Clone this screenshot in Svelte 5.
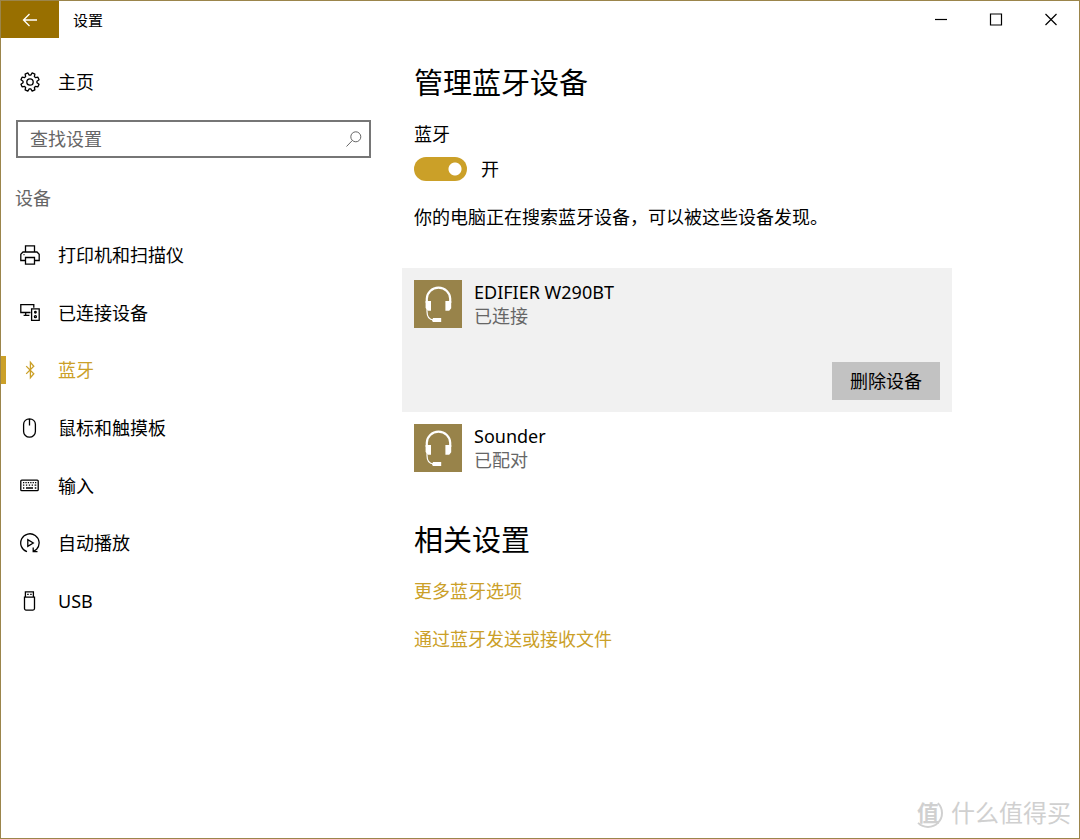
<script>
  let query = $state('');
  let bluetoothOn = $state(true);

  const navItems = [
    { id: 'printers', label: '打印机和扫描仪' },
    { id: 'connected', label: '已连接设备' },
    { id: 'bluetooth', label: '蓝牙' },
    { id: 'mouse', label: '鼠标和触摸板' },
    { id: 'typing', label: '输入' },
    { id: 'autoplay', label: '自动播放' },
    { id: 'usb', label: 'USB' }
  ];
  let active = $state('bluetooth');

  const devices = [
    { name: 'EDIFIER W290BT', status: '已连接', selected: true },
    { name: 'Sounder', status: '已配对', selected: false }
  ];

  // Outline of an eight-toothed gear centred in a 20×20 box.
  const gear =
    'M' +
    Array.from({ length: 8 }, (_, k) =>
      [[-16, 7], [-9, 9.3], [9, 9.3], [16, 7]].map(([offset, r]) => {
        const a = ((k * 45 + 22.5 + offset) * Math.PI) / 180;
        return `${(10 + r * Math.cos(a)).toFixed(2)} ${(10 + r * Math.sin(a)).toFixed(2)}`;
      }).join('L')
    ).join('L') +
    'Z';
</script>

{#snippet icon(id)}
  <svg class="icon" viewBox="0 0 20 20" width="20" height="20" aria-hidden="true">
    {#if id === 'home'}
      <path d={gear} stroke-linejoin="round" />
      <circle cx="10" cy="10" r="3.2" />
    {:else if id === 'printers'}
      <path d="M5.5 7V.9h9V7M5 15.5H.8V9.2L3 7h14l2.2 2.2v6.3H15M5.5 12.5h9v6.6h-9z" />
      <path d="M3.5 9.6h1" />
    {:else if id === 'connected'}
      <path d="M10.5 9.5H.8V1.6h13v3.2M5.7 9.5v2.7M3.6 12.3h5.8M11.6 5.9h7.6v11.5h-7.6z" />
      <circle cx="15.4" cy="9.3" r=".8" />
      <circle cx="15.4" cy="13.7" r="1" />
    {:else if id === 'bluetooth'}
      <path d="M6.2 6.1 13.8 13.8 10.4 17.7V2.3L13.8 6.2 6.2 13.9" />
    {:else if id === 'mouse'}
      <path d="M3.6 6.2a5.9 5.4 0 0 1 11.8 0v7.2a5.9 5.8 0 0 1-11.8 0zM9.5.8v6.7" />
    {:else if id === 'typing'}
      <rect x=".8" y="4.1" width="17.4" height="10.6" rx="1" />
      <path d="M3 6.7h1.3M5.4 6.7h1.3M7.8 6.7h1.3M10.2 6.7h1.3M12.6 6.7h1.3M15 6.7h1.3M3 9.2h1.3M5.9 9.2h1.3M8.8 9.2h1.3M11.7 9.2h1.3M14.6 9.2h1.7M3 12h1.3M6 12h7M14.8 12h1.5" />
    {:else if id === 'autoplay'}
      <path d="M7 18.7A9.2 9.2 0 1 1 16.6 16.3L13.6 18.4M13.2 14.4v4.3h4.3M7.8 6.6v6.8l5.5-3.4z" />
    {:else if id === 'usb'}
      <path d="M5.4 6V.8h8V6M4.5 6.1h10v11.5a1.5 1.5 0 0 1-1.5 1.5H6a1.5 1.5 0 0 1-1.5-1.5z" />
      <path d="M7.2 3.4h1.5M10.2 3.4h1.5" />
    {/if}
  </svg>
{/snippet}

<div class="window">
  <header class="titlebar">
    <button class="back" aria-label="返回">
      <svg viewBox="0 0 16 14" width="16" height="14" aria-hidden="true"><path d="M15 7H1.5M7.5 1 1.5 7l6 6" /></svg>
    </button>
    <span class="title">设置</span>
    <div class="controls">
      <button aria-label="最小化"><svg viewBox="0 0 14 14" width="14" height="14" aria-hidden="true"><path d="M1 6.5h12" /></svg></button>
      <button aria-label="最大化"><svg viewBox="0 0 14 14" width="14" height="14" aria-hidden="true"><path d="M1.5 1h11v11h-11z" /></svg></button>
      <button aria-label="关闭"><svg viewBox="0 0 14 14" width="14" height="14" aria-hidden="true"><path d="m1.5 1 11 11m0-11-11 11" /></svg></button>
    </div>
  </header>

  <div class="body">
    <aside>
      <a class="item" href="#home">{@render icon('home')}<span>主页</span></a>
      <div class="search">
        <input type="text" placeholder="查找设置" aria-label="查找设置" bind:value={query} />
        <svg viewBox="0 0 18 18" width="18" height="18" aria-hidden="true"><circle cx="10.8" cy="6.8" r="5" /><path d="M7.3 10.5 1.5 16.5" /></svg>
      </div>
      <p class="group">设备</p>
      <nav>
        {#each navItems as item (item.id)}
          <a class="item" class:active={active === item.id} href={'#' + item.id} onclick={() => (active = item.id)}>
            {@render icon(item.id)}<span>{item.label}</span>
          </a>
        {/each}
      </nav>
    </aside>

    <main>
      <h1>管理蓝牙设备</h1>
      <label class="label" for="bt">蓝牙</label>
      <div class="toggle">
        <input id="bt" type="checkbox" role="switch" bind:checked={bluetoothOn} />
        <span>{bluetoothOn ? '开' : '关'}</span>
      </div>
      <p class="note">你的电脑正在搜索蓝牙设备，可以被这些设备发现。</p>

      <ul>
        {#each devices as device (device.name)}
          <li class:selected={device.selected}>
            <div class="device">
              <svg class="headset" viewBox="0 0 48 48" width="48" height="48" aria-hidden="true">
                <path class="line" d="M12.8 23v-4.2a11.6 11 0 0 1 23.4 0V23" />
                <path class="solid" d="M11.6 21h5.4v9.8h-3L11.6 28zM31.4 21h5.8v7.2l-2 2.6h-3.8zM19 38h8.2v4H19l-1-1.2z" />
                <path class="thin" d="M13 28v3.5q0 8 6.5 8.5" />
              </svg>
              <div>
                <p>{device.name}</p>
                <p class="status">{device.status}</p>
              </div>
            </div>
            {#if device.selected}<button class="remove">删除设备</button>{/if}
          </li>
        {/each}
      </ul>

      <h2>相关设置</h2>
      <a class="link" href="#more">更多蓝牙选项</a>
      <a class="link" href="#transfer">通过蓝牙发送或接收文件</a>
    </main>
  </div>

  <div class="watermark"><span class="seal">值</span><span>什么值得买</span></div>
</div>

<style>
  :global(body) {
    margin: 0;
    background: #fff;
  }
  .window {
    box-sizing: border-box;
    position: relative;
    min-height: 100vh;
    border: 1px solid #9b854b;
    color: #000;
    background: #fff;
    font: 18px/24px 'Noto Sans', 'Noto Sans CJK SC', sans-serif;
  }
  p,
  h1,
  h2,
  ul {
    margin: 0;
    padding: 0;
    font-weight: 400;
    list-style: none;
  }
  button,
  input {
    font: inherit;
    color: inherit;
    border: 0;
    border-radius: 0;
    padding: 0;
    margin: 0;
  }
  svg {
    fill: none;
    stroke: currentColor;
    flex: none;
  }
  a {
    color: inherit;
    text-decoration: none;
  }
  .titlebar {
    display: flex;
    align-items: stretch;
    height: 37px;
  }
  .back {
    display: grid;
    place-items: center;
    width: 58px;
    background: #986f00;
    color: #fff;
  }
  .back svg {
    stroke-width: 1.3;
  }
  .title {
    flex: 1;
    padding-left: 14px;
    font-size: 15px;
    line-height: 38px;
  }
  .controls {
    display: flex;
    padding-right: 1px;
  }
  .controls button {
    display: grid;
    place-items: center;
    width: 55px;
    background: none;
  }
  .controls svg {
    stroke-width: 1.2;
  }
  .body {
    display: grid;
    grid-template-columns: 401px 1fr;
  }
  aside {
    padding-top: 15px;
  }
  .item {
    display: flex;
    align-items: center;
    gap: 18px;
    min-height: 57px;
    padding-left: 19px;
  }
  .icon {
    stroke-width: 1.3;
  }
  .search {
    display: flex;
    align-items: center;
    box-sizing: border-box;
    height: 38px;
    margin: 10px 31px 0 15px;
    padding: 0 6px 0 12px;
    border: 2px solid #767676;
    color: #666;
  }
  .search input {
    flex: 1;
    min-width: 0;
    background: none;
    outline: 0;
  }
  .search input::placeholder {
    color: #666;
    opacity: 1;
  }
  .group {
    margin: 20px 0 8px 14px;
    line-height: 40px;
    color: #666;
  }
  nav {
    display: grid;
    grid-auto-rows: 1fr;
    min-height: 404px;
  }
  .active {
    color: #cba028;
    background: linear-gradient(#cba028, #cba028) left center / 5px 28px no-repeat;
  }
  main {
    max-width: 550px;
    padding: 25px 12px;
    box-sizing: border-box;
  }
  h1,
  h2 {
    font-size: 29px;
    line-height: 40px;
  }
  .label {
    display: block;
    margin-top: 19px;
  }
  .toggle {
    display: flex;
    align-items: center;
    gap: 14px;
    margin-top: 11px;
  }
  .toggle input {
    appearance: none;
    width: 53px;
    height: 24px;
    border-radius: 12px;
    background: radial-gradient(circle at 41px 12px, #fff 6px, #cba028 7px);
  }
  .toggle input:not(:checked) {
    background: radial-gradient(circle at 12px 12px, #fff 6px, #999 7px);
  }
  .note {
    margin-top: 24px;
  }
  ul {
    margin: 39px -12px 0;
  }
  li {
    padding: 12px;
  }
  .selected {
    display: flex;
    flex-direction: column;
    background: #f1f1f1;
  }
  .device {
    display: flex;
    gap: 12px;
  }
  .headset {
    background: #98834a;
    color: #fff;
  }
  .line {
    stroke-width: 2.2;
  }
  .thin {
    stroke-width: 1.2;
  }
  .solid {
    fill: currentColor;
    stroke: none;
  }
  .status {
    color: #666;
  }
  .remove {
    align-self: flex-end;
    width: 108px;
    height: 38px;
    margin-top: 34px;
    background: #c2c2c2;
  }
  h2 {
    margin-top: 36px;
  }
  .link {
    display: block;
    width: fit-content;
    margin-top: 24px;
    color: #cba028;
  }
  h2 + .link {
    margin-top: 19px;
  }
  .watermark {
    position: absolute;
    right: 8px;
    bottom: 10px;
    display: flex;
    align-items: center;
    gap: 8px;
    color: #d0d0d0;
    font-size: 24px;
    line-height: 30px;
  }
  .seal {
    box-sizing: border-box;
    width: 30px;
    height: 30px;
    border: 2px solid #d0d0d0;
    border-left-color: transparent;
    border-top-color: transparent;
    border-radius: 50%;
    font-size: 22px;
    line-height: 24px;
    font-weight: 700;
    text-align: center;
  }
</style>
